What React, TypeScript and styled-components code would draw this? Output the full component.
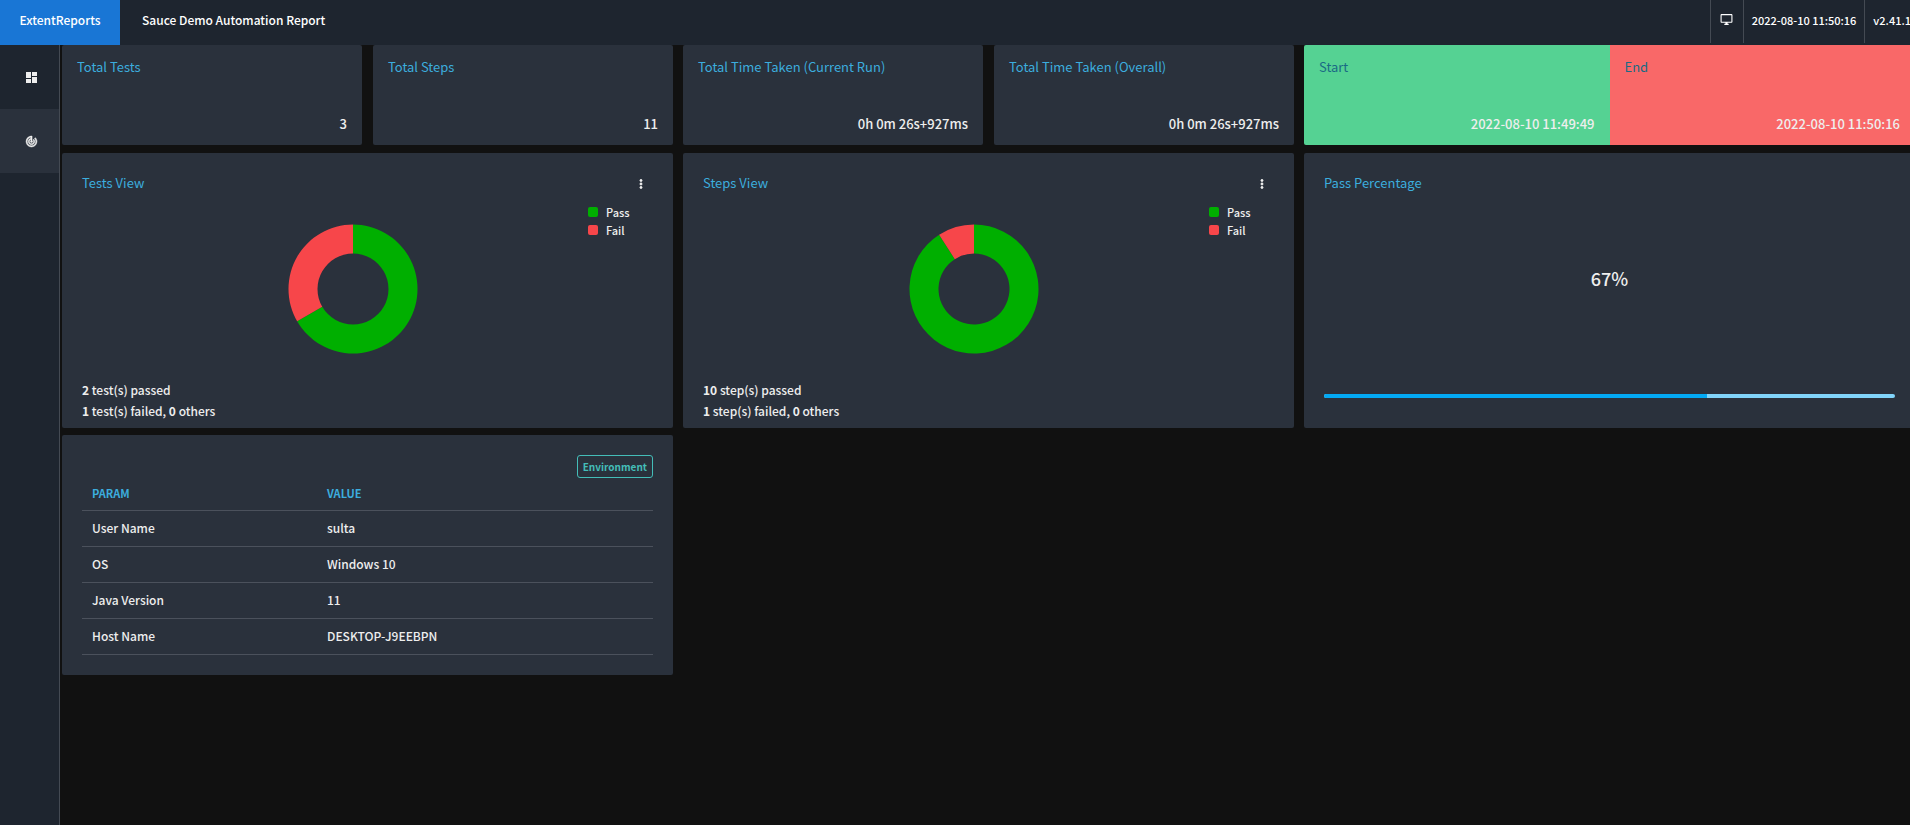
import React from "react";
import styled, { createGlobalStyle, css } from "styled-components";
import { MdTrackChanges, MdMoreVert, MdOutlineDesktopWindows } from "react-icons/md";

const GlobalStyle = createGlobalStyle`
  *, *::before, *::after { box-sizing: border-box; }
  html { background: #111; }
  body {
    margin: 0;
    overflow: hidden;
    background: #111;
    color: #eee;
    font-family: "Noto Sans CJK SC", "Noto Sans", sans-serif;
    font-size: 12px;
    font-weight: 500;
    line-height: 21px;
  }
  h1, h2, p, dl, dt, dd, ul { margin: 0; padding: 0; font: inherit; }
  ul { list-style: none; }
  button { font: inherit; }
`;

const Page = styled.div`
  min-height: 100vh;
  display: flex;
  flex-direction: column;
`;

const Header = styled.header`
  display: flex;
  height: 45px;
  margin-right: -1px;
  background: #1e252f;
  color: #fff;
  line-height: 40px;
`;

const Brand = styled.a`
  width: 120px;
  background: #1976d5;
  color: #fff;
  text-align: center;
  text-decoration: none;
`;

const ReportName = styled.h1`
  flex: 1;
  padding-left: 22px;
`;

const HeaderItem = styled.div`
  height: 43px;
  padding: 0 8px;
  border-left: 1px solid #444a53;
  font-size: 11px;
  white-space: nowrap;
`;

const Version = styled(HeaderItem)`
  padding-right: 0;
`;

const IconButton = styled.button`
  display: flex;
  align-items: center;
  justify-content: center;
  padding: 0;
  border: 0;
  background: none;
  color: inherit;
  cursor: pointer;
`;

const HeaderButton = styled(IconButton)`
  width: 33px;
  height: 43px;
  padding-bottom: 4px;
  border-left: 1px solid #444a53;
`;

const boldIcon = css`
  svg path { stroke-width: 1px; }
  svg path[fill="none"] { stroke: none; }
`;

const MenuButton = styled(IconButton)`
  padding-top: 2px;
  ${boldIcon}
`;

const Body = styled.div`
  flex: 1;
  display: flex;
`;

const Sidebar = styled.nav`
  width: 60px;
  background: #1e252f;
  border-right: 1px solid #444a53;
`;

const SideLink = styled.a<{ $active?: boolean }>`
  display: flex;
  align-items: center;
  justify-content: center;
  height: 64px;
  padding-left: 4px;
  color: #eee;
  background: ${(p) => (p.$active ? "#2a313c" : "transparent")};
  ${boldIcon}
`;

const Content = styled.main`
  flex: 1;
  display: grid;
  grid-template-columns: repeat(3, 1fr);
  grid-template-rows: 100px 275px auto;
  align-content: start;
  column-gap: 10px;
  row-gap: 8px;
  margin: 0 -5px 0 2px;
`;

const StatGroup = styled.dl<{ $joined?: boolean }>`
  display: grid;
  grid-template-columns: 1fr 1fr;
  gap: ${(p) => (p.$joined ? 0 : 11)}px;
`;

const tones = {
  plain: css`background: #2a313c; color: #eee; border-radius: 2px;`,
  start: css`background: #55d293; color: #eee; border-radius: 2px 0 0 2px;`,
  end: css`background: #f96868; color: #eee; border-radius: 0 2px 2px 0;`,
};

const StatCard = styled.div<{ $tone: keyof typeof tones }>`
  display: flex;
  flex-direction: column;
  justify-content: space-between;
  padding: 11px 15px;
  ${(p) => tones[p.$tone]}
`;

const StatLabel = styled.dt<{ $dark?: boolean }>`
  && {
    font-size: 13px;
    font-weight: 400;
  }
  color: ${(p) => (p.$dark ? "#1a6a85" : "#3cadde")};
`;

const StatValue = styled.dd`
  && { font-size: 13px; }
  text-align: right;
`;

const Card = styled.section`
  display: flex;
  flex-direction: column;
  padding: 19px 20px 20px;
  border-radius: 2px;
  background: #2a313c;
`;

const CardHead = styled.div`
  display: flex;
  justify-content: space-between;
  padding-right: 5px;
`;

const CardTitle = styled.h2`
  && {
    font-size: 13px;
    font-weight: 400;
  }
  color: #3cadde;
`;

const ChartRow = styled.div`
  flex: 1;
  display: flex;
`;

const ChartArea = styled.div`
  flex: 1;
  padding: 31px 0 0 36px;
  text-align: center;
`;

const Legend = styled.ul`
  width: 65px;
  padding-top: 10px;
`;

const LegendItem = styled.li<{ $color: string }>`
  display: flex;
  align-items: center;
  gap: 8px;
  font-size: 11px;
  line-height: 18px;
  &::before {
    content: "";
    width: 10px;
    height: 10px;
    border-radius: 2px;
    background: ${(p) => p.$color};
  }
`;

const Summary = styled.p`
  margin-bottom: -13px;
  b { font-weight: 700; }
`;

const Percent = styled.p`
  && { font-size: 18px; }
  margin-top: 75px;
  text-align: center;
`;

const Progress = styled.div`
  height: 4px;
  margin-top: 105px;
  border-radius: 2px;
  overflow: hidden;
  background: #81d4fa;
`;

const ProgressFill = styled.div`
  height: 100%;
  background: #03a9f4;
`;

const EnvCard = styled(Card)`
  margin-top: -1px;
  padding-top: 20px;
  align-items: flex-end;
`;

const Badge = styled.span`
  padding: 0 5px;
  border: 1px solid #44bdb8;
  border-radius: 3px;
  color: #44bdb8;
  font-size: 10px;
  font-weight: 700;
`;

const EnvTable = styled.table`
  width: 100%;
  table-layout: fixed;
  border-collapse: collapse;
  th, td {
    height: 36px;
    padding: 0 10px 2px;
    border-bottom: 1px solid #4b515c;
    text-align: left;
  }
  th {
    height: 32px;
    padding-bottom: 0;
    color: #3cadde;
    font-size: 11px;
    font-weight: 700;
  }
  th:first-child { width: 235px; }
`;

const GREEN = "#00af00";
const RED = "#f7464a";

function TilesIcon() {
  return (
    <svg width="11" height="11" viewBox="0 0 11 11" fill="currentColor" aria-hidden="true">
      <rect width="5" height="6" />
      <rect y="7" width="5" height="4" />
      <rect x="6" width="5" height="4" />
      <rect x="6" y="5" width="5" height="6" />
    </svg>
  );
}

function Donut({ pass, total, label }: { pass: number; total: number; label: string }) {
  const angle = (pass / total) * 2 * Math.PI;
  const point = (r: number) => `${65 + r * Math.sin(angle)} ${65 - r * Math.cos(angle)}`;
  const large = angle > Math.PI ? 1 : 0;
  return (
    <svg width="130" height="130" viewBox="0 0 130 130" role="img" aria-label={label}>
      <path fill={GREEN} d={`M65 .5A64.5 64.5 0 ${large} 1 ${point(64.5)}L${point(35.5)}A35.5 35.5 0 ${large} 0 65 29.5Z`} />
      <path fill={RED} d={`M65 .5A64.5 64.5 0 ${1 - large} 0 ${point(64.5)}L${point(35.5)}A35.5 35.5 0 ${1 - large} 1 65 29.5Z`} />
    </svg>
  );
}

function ViewCard({ title, unit, pass, fail }: { title: string; unit: string; pass: number; fail: number }) {
  return (
    <Card>
      <CardHead>
        <CardTitle>{title}</CardTitle>
        <MenuButton aria-label={`${title} options`}><MdMoreVert size={14} /></MenuButton>
      </CardHead>
      <ChartRow>
        <ChartArea><Donut pass={pass} total={pass + fail} label={title} /></ChartArea>
        <Legend>
          <LegendItem $color={GREEN}>Pass</LegendItem>
          <LegendItem $color={RED}>Fail</LegendItem>
        </Legend>
      </ChartRow>
      <Summary>
        <b>{pass}</b> {unit}(s) passed<br />
        <b>{fail}</b> {unit}(s) failed, <b>0</b> others
      </Summary>
    </Card>
  );
}

function Stat({ label, value, tone = "plain" }: { label: string; value: string; tone?: keyof typeof tones }) {
  return (
    <StatCard $tone={tone}>
      <StatLabel $dark={tone !== "plain"}>{label}</StatLabel>
      <StatValue>{value}</StatValue>
    </StatCard>
  );
}

const environment = [
  ["User Name", "sulta"],
  ["OS", "Windows 10"],
  ["Java Version", "11"],
  ["Host Name", "DESKTOP-J9EEBPN"],
];

export default function App() {
  return (
    <Page>
      <GlobalStyle />
      <Header>
        <Brand href="#">ExtentReports</Brand>
        <ReportName>Sauce Demo Automation Report</ReportName>
        <HeaderButton aria-label="Toggle theme"><MdOutlineDesktopWindows size={13} /></HeaderButton>
        <HeaderItem>2022-08-10 11:50:16</HeaderItem>
        <Version>v2.41.1</Version>
      </Header>
      <Body>
        <Sidebar>
          <SideLink href="#tests" aria-label="Tests"><TilesIcon /></SideLink>
          <SideLink href="#dashboard" aria-label="Dashboard" $active><MdTrackChanges size={13} /></SideLink>
        </Sidebar>
        <Content>
          <StatGroup>
            <Stat label="Total Tests" value="3" />
            <Stat label="Total Steps" value="11" />
          </StatGroup>
          <StatGroup>
            <Stat label="Total Time Taken (Current Run)" value="0h 0m 26s+927ms" />
            <Stat label="Total Time Taken (Overall)" value="0h 0m 26s+927ms" />
          </StatGroup>
          <StatGroup $joined>
            <Stat label="Start" value="2022-08-10 11:49:49" tone="start" />
            <Stat label="End" value="2022-08-10 11:50:16" tone="end" />
          </StatGroup>
          <ViewCard title="Tests View" unit="test" pass={2} fail={1} />
          <ViewCard title="Steps View" unit="step" pass={10} fail={1} />
          <Card>
            <CardTitle>Pass Percentage</CardTitle>
            <Percent>67%</Percent>
            <Progress><ProgressFill style={{ width: "67%" }} /></Progress>
          </Card>
          <EnvCard>
            <Badge>Environment</Badge>
            <EnvTable>
              <thead><tr><th>PARAM</th><th>VALUE</th></tr></thead>
              <tbody>
                {environment.map(([param, value]) => (
                  <tr key={param}><td>{param}</td><td>{value}</td></tr>
                ))}
              </tbody>
            </EnvTable>
          </EnvCard>
        </Content>
      </Body>
    </Page>
  );
}
